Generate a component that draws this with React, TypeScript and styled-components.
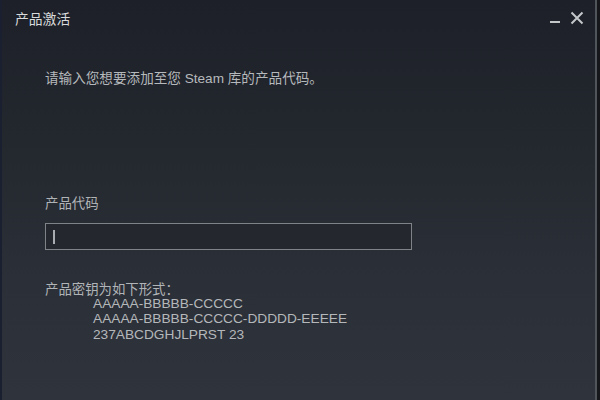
import styled, { createGlobalStyle } from 'styled-components';

const GlobalStyle = createGlobalStyle`
  html, body {
    margin: 0;
    padding: 0;
    background: #15171b;
  }
  body {
    font-family: "Liberation Sans", "Noto Sans CJK SC", Arial, sans-serif;
  }
`;

const Page = styled.div`
  display: flex;
  width: 600px;
  height: 400px;
  overflow: hidden;
`;

const Window = styled.div`
  display: flex;
  flex-direction: column;
  width: 593px;
  height: 400px;
  border-left: 2px solid #1b2030;
  border-right: 2px solid #50545b;
  background: linear-gradient(180deg, #1d2028 0%, #23272e 35%, #2b2f37 70%, #2f343c 100%);
`;

const TitleBar = styled.div`
  display: flex;
  align-items: center;
  justify-content: space-between;
  height: 36px;
  padding: 0 9px 0 13px;
`;

const Title = styled.div`
  font-size: 13.8px;
  color: #d8dadc;
`;

const Controls = styled.div`
  display: flex;
  align-items: center;
  gap: 4px;
`;

const ControlButton = styled.button`
  display: flex;
  align-items: center;
  justify-content: center;
  width: 18px;
  height: 18px;
  padding: 0;
  border: none;
  background: transparent;
  color: #c4c7ca;
  cursor: pointer;
`;

const Content = styled.div`
  display: flex;
  flex-direction: column;
  padding: 35px 0 0 43px;
`;

const Intro = styled.p`
  margin: 0;
  font-size: 13.6px;
  line-height: 16px;
  color: #b6b9bc;
`;

const Field = styled.div`
  display: flex;
  flex-direction: column;
  gap: 11px;
  margin-top: 109px;
`;

const Label = styled.div<{ $tight?: boolean }>`
  font-size: 13.4px;
  line-height: ${p => (p.$tight ? '13px' : '16px')};
  color: #b1b4b7;
`;

const Caret = styled.span`
  display: block;
  width: 2px;
  height: 14px;
  background: #a9acb0;
`;

const InputBox = styled.div`
  box-sizing: border-box;
  display: flex;
  align-items: center;
  width: 367px;
  height: 27px;
  padding-left: 7px;
  border: 1px solid #7f8287;
  background: #24272e;
`;

const Formats = styled.div`
  display: flex;
  flex-direction: column;
  margin-top: 32.5px;
`;

const FormatList = styled.div`
  display: flex;
  flex-direction: column;
  padding-left: 48px;
`;

const FormatLine = styled.div`
  font-size: 13.7px;
  line-height: 15.5px;
  color: #b5b8bb;
`;

const formats = [
  'AAAAA-BBBBB-CCCCC',
  'AAAAA-BBBBB-CCCCC-DDDDD-EEEEE',
  '237ABCDGHJLPRST 23',
];

export default function App() {
  return (
    <>
      <GlobalStyle />
      <Page>
        <Window>
          <TitleBar>
            <Title>产品激活</Title>
            <Controls>
              <ControlButton aria-label="minimize">
                <svg width="12" height="18" viewBox="0 0 12 18">
                  <rect x="1" y="12" width="10" height="2" fill="currentColor" />
                </svg>
              </ControlButton>
              <ControlButton aria-label="close">
                <svg width="14" height="14" viewBox="0 0 14 14">
                  <path d="M1.5 1.5 L12.5 12.5 M12.5 1.5 L1.5 12.5" stroke="currentColor" strokeWidth="2" />
                </svg>
              </ControlButton>
            </Controls>
          </TitleBar>
          <Content>
            <Intro>请输入您想要添加至您 Steam 库的产品代码。</Intro>
            <Field>
              <Label>产品代码</Label>
              <InputBox>
                <Caret />
              </InputBox>
            </Field>
            <Formats>
              <Label $tight>产品密钥为如下形式：</Label>
              <FormatList>
                {formats.map(f => (
                  <FormatLine key={f}>{f}</FormatLine>
                ))}
              </FormatList>
            </Formats>
          </Content>
        </Window>
      </Page>
    </>
  );
}
